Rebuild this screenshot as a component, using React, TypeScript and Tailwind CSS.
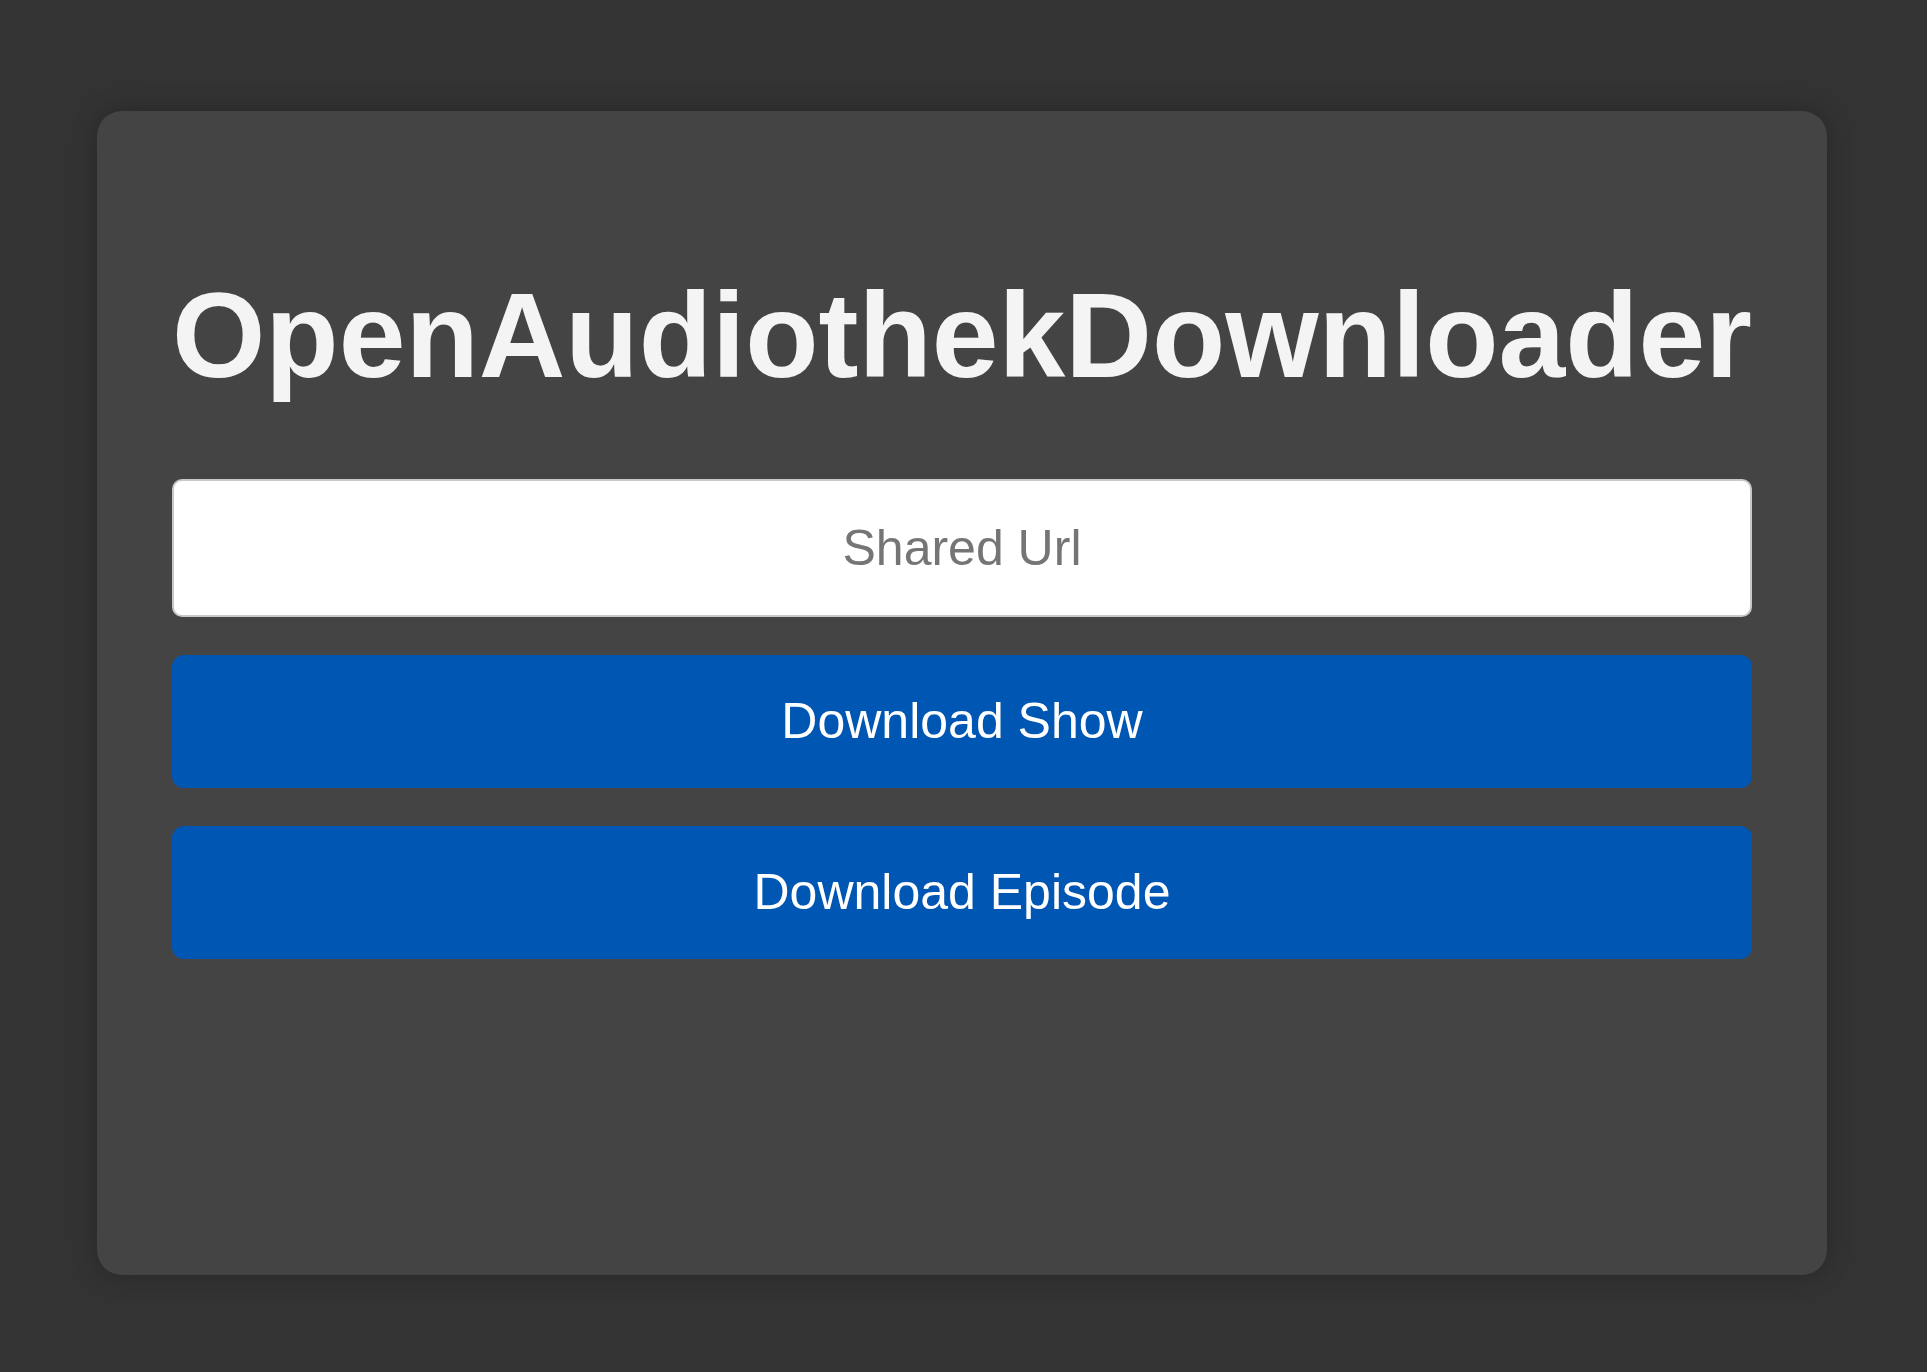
import React from 'react';

/** Main downloader page */
const App = () => {
    return (
        <div className="min-h-screen bg-[#333333] pt-[111px] pl-[97px] pr-[100px] font-['Liberation_Sans',Arial,sans-serif]">
            <main className="h-[1164px] rounded-[25px] bg-[#444444] shadow-[0_0_24px_rgba(0,0,0,0.25)] px-[75px] pt-[157px] flex flex-col">
                <h1 className="text-[120px] leading-[134px] font-bold text-[#f4f4f4] text-center whitespace-nowrap">
                    OpenAudiothekDownloader
                </h1>
                <input
                    type="text"
                    placeholder="Shared Url"
                    className="mt-[77px] h-[138px] w-full rounded-[10px] border-2 border-[#c8c8c8] bg-white text-center text-[50px] text-[#333] placeholder:text-[#757575] outline-none"
                />
                <button className="mt-[38px] h-[133px] w-full rounded-[12px] bg-[#0056b3] text-white text-[50px]">
                    Download Show
                </button>
                <button className="mt-[38px] h-[133px] w-full rounded-[12px] bg-[#0056b3] text-white text-[50px]">
                    Download Episode
                </button>
            </main>
        </div>
    );
};

export default App;
